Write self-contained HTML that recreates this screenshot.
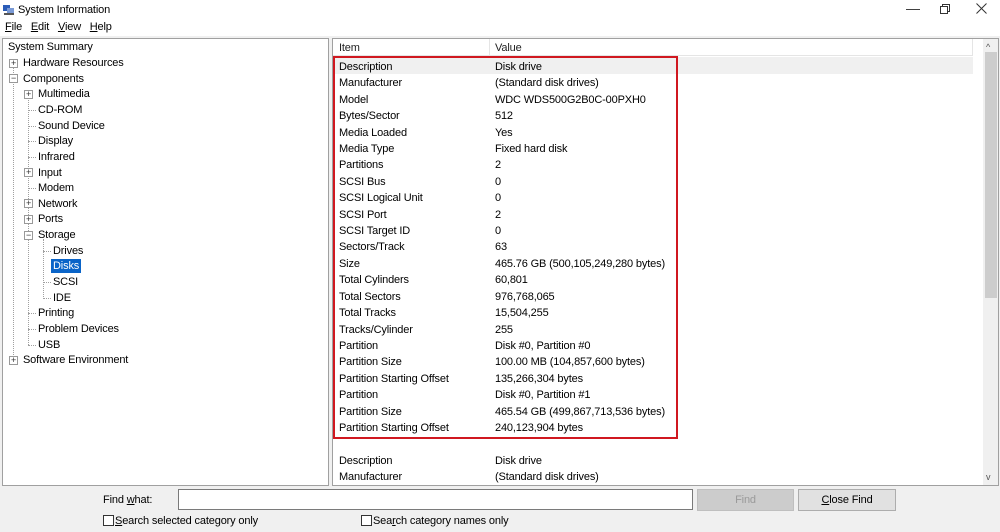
<!DOCTYPE html>
<html><head><style>
*{margin:0;padding:0;box-sizing:border-box}
body{width:1000px;height:532px;background:#f0f0f0;font-family:"Liberation Sans",sans-serif;font-size:11px;color:#000;position:relative;overflow:hidden;letter-spacing:-0.15px}
.a{position:absolute;white-space:nowrap;line-height:14px}
#top{position:absolute;left:0;top:0;width:1000px;height:36px;background:#fff}
#lp{position:absolute;left:2px;top:38px;width:327px;height:448px;background:#fff;border:1px solid #a0a0a0}
#rp{position:absolute;left:332px;top:38px;width:667px;height:448px;background:#fff;border:1px solid #a0a0a0}
.pb{position:absolute;width:9px;height:9px;border:1px solid #999;background:#fff;font-size:9px;line-height:7px;text-align:center;color:#333}
.vl{position:absolute;border-left:1px dotted #a0a0a0}
.hl{position:absolute;border-top:1px dotted #a0a0a0;height:0}
.btn{position:absolute;border:1px solid #adadad;background:#e1e1e1;text-align:center;line-height:20px}
.cb{position:absolute;width:11px;height:11px;border:1px solid #333;background:#fff}
#tree{position:absolute;left:0;top:1px;width:330px;height:400px}
</style></head><body>
<div id="top"></div>
<svg class="a" style="left:3px;top:4px" width="12" height="12"><rect x="0" y="1" width="7" height="6" fill="#2b5cb8"/><rect x="4" y="4" width="7" height="6" fill="#7a9ad6"/><rect x="1" y="9" width="10" height="2" fill="#555"/></svg>
<div class="a" style="left:18px;top:3px">System Information</div>
<div class="a" style="left:906px;top:1px;font-size:14px;color:#333">—</div>
<svg class="a" style="left:940px;top:4px" width="10" height="10"><rect x="0.5" y="2.5" width="7" height="7" fill="none" stroke="#333"/><path d="M2.5 2.5V0.5H9.5V7.5H7.5" fill="none" stroke="#333"/></svg>
<svg class="a" style="left:976px;top:3px" width="11" height="11"><path d="M0.5 0.5L10.5 10.5M10.5 0.5L0.5 10.5" stroke="#333"/></svg>
<div class="a" style="left:5px;top:20px"><u>F</u>ile&nbsp;&nbsp;&nbsp;<u>E</u>dit&nbsp;&nbsp;&nbsp;<u>V</u>iew&nbsp;&nbsp;&nbsp;<u>H</u>elp</div>

<div id="lp"></div>
<div id="tree">
<div class="vl" style="left:13px;top:66px;height:294px"></div>
<div class="vl" style="left:28px;top:97px;height:247px"></div>
<div class="vl" style="left:43px;top:238px;height:60px"></div>
<div class="hl" style="left:28px;top:109px;width:8px"></div>
<div class="hl" style="left:28px;top:125px;width:8px"></div>
<div class="hl" style="left:28px;top:140px;width:8px"></div>
<div class="hl" style="left:28px;top:156px;width:8px"></div>
<div class="hl" style="left:28px;top:187px;width:8px"></div>
<div class="hl" style="left:28px;top:312px;width:8px"></div>
<div class="hl" style="left:28px;top:328px;width:8px"></div>
<div class="hl" style="left:28px;top:344px;width:8px"></div>
<div class="hl" style="left:43px;top:250px;width:8px"></div>
<div class="hl" style="left:43px;top:281px;width:8px"></div>
<div class="hl" style="left:43px;top:297px;width:8px"></div>
<div class="pb" style="left:9px;top:58px">+</div>
<div class="pb" style="left:9px;top:73px">−</div>
<div class="pb" style="left:24px;top:89px">+</div>
<div class="pb" style="left:24px;top:167px">+</div>
<div class="pb" style="left:24px;top:198px">+</div>
<div class="pb" style="left:24px;top:214px">+</div>
<div class="pb" style="left:24px;top:230px">−</div>
<div class="pb" style="left:9px;top:355px">+</div>
<div class="a" style="left:8px;top:39px">System Summary</div>
<div class="a" style="left:23px;top:55px">Hardware Resources</div>
<div class="a" style="left:23px;top:71px">Components</div>
<div class="a" style="left:38px;top:86px">Multimedia</div>
<div class="a" style="left:38px;top:102px">CD-ROM</div>
<div class="a" style="left:38px;top:118px">Sound Device</div>
<div class="a" style="left:38px;top:133px">Display</div>
<div class="a" style="left:38px;top:149px">Infrared</div>
<div class="a" style="left:38px;top:165px">Input</div>
<div class="a" style="left:38px;top:180px">Modem</div>
<div class="a" style="left:38px;top:196px">Network</div>
<div class="a" style="left:38px;top:211px">Ports</div>
<div class="a" style="left:38px;top:227px">Storage</div>
<div class="a" style="left:53px;top:243px">Drives</div>
<div class="a" style="left:51px;top:258px;background:#0a64c8;color:#fff;padding:0 2px">Disks</div>
<div class="a" style="left:53px;top:274px">SCSI</div>
<div class="a" style="left:53px;top:290px">IDE</div>
<div class="a" style="left:38px;top:305px">Printing</div>
<div class="a" style="left:38px;top:321px">Problem Devices</div>
<div class="a" style="left:38px;top:337px">USB</div>
<div class="a" style="left:23px;top:352px">Software Environment</div>
</div>

<div id="rp"></div>
<div style="position:absolute;left:333px;top:39px;width:640px;height:17px;border-bottom:1px solid #e5e5e5;border-right:1px solid #e5e5e5"></div>
<div style="position:absolute;left:489px;top:39px;height:17px;border-left:1px solid #e5e5e5"></div>
<div class="a" style="left:339px;top:41px;color:#222">Item</div>
<div class="a" style="left:495px;top:41px;color:#222">Value</div>
<div style="position:absolute;left:334px;top:57px;width:639px;height:17px;background:#f0f0f0"></div>
<div style="position:absolute;left:983px;top:39px;width:15px;height:446px;background:#f0f0f0"></div>
<div style="position:absolute;left:985px;top:52px;width:12px;height:246px;background:#cdcdcd"></div>
<div class="a" style="left:986px;top:40px;font-size:9px;color:#555">^</div>
<div class="a" style="left:986px;top:470px;font-size:9px;color:#555">v</div>

<div class="a" style="left:339px;top:59px;line-height:16.4px">Description<br>Manufacturer<br>Model<br>Bytes/Sector<br>Media Loaded<br>Media Type<br>Partitions<br>SCSI Bus<br>SCSI Logical Unit<br>SCSI Port<br>SCSI Target ID<br>Sectors/Track<br>Size<br>Total Cylinders<br>Total Sectors<br>Total Tracks<br>Tracks/Cylinder<br>Partition<br>Partition Size<br>Partition Starting Offset<br>Partition<br>Partition Size<br>Partition Starting Offset<br><br>Description<br>Manufacturer</div>
<div class="a" style="left:495px;top:59px;line-height:16.4px">Disk drive<br>(Standard disk drives)<br>WDC WDS500G2B0C-00PXH0<br>512<br>Yes<br>Fixed hard disk<br>2<br>0<br>0<br>2<br>0<br>63<br>465.76 GB (500,105,249,280 bytes)<br>60,801<br>976,768,065<br>15,504,255<br>255<br>Disk #0, Partition #0<br>100.00 MB (104,857,600 bytes)<br>135,266,304 bytes<br>Disk #0, Partition #1<br>465.54 GB (499,867,713,536 bytes)<br>240,123,904 bytes<br><br>Disk drive<br>(Standard disk drives)</div>
<div style="position:absolute;left:333px;top:56px;width:345px;height:383px;border:2px solid #d01820"></div>

<div class="a" style="left:103px;top:493px">Find <u>w</u>hat:</div>
<div style="position:absolute;left:178px;top:489px;width:515px;height:21px;background:#fff;border:1px solid #7a7a7a"></div>
<div class="btn" style="left:697px;top:489px;width:97px;height:22px;background:#ccc;border-color:#bfbfbf;color:#9a9a9a">Find</div>
<div class="btn" style="left:798px;top:489px;width:98px;height:22px"><u>C</u>lose Find</div>
<div class="cb" style="left:103px;top:515px"></div>
<div class="a" style="left:115px;top:514px"><u>S</u>earch selected category only</div>
<div class="cb" style="left:361px;top:515px"></div>
<div class="a" style="left:373px;top:514px">Sea<u>r</u>ch category names only</div>
</body></html>
